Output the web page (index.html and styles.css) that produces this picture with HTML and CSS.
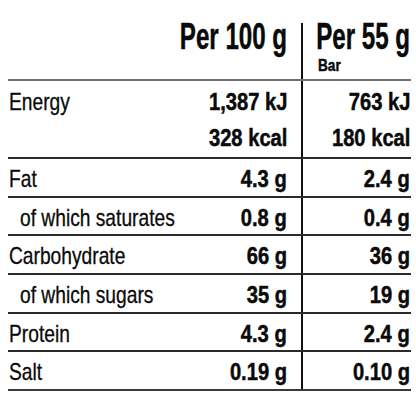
FILE: index.html
```html
<!DOCTYPE html>
<html lang="en">
<head>
    <meta charset="UTF-8">
    <meta name="viewport" content="width=device-width, initial-scale=1.0">
    <title>Nutrition Information</title>
    <link rel="stylesheet" href="styles.css">
</head>
<body>

    <div class="nutrition">
        <!-- Header -->
        <div class="row head">
            <div class="label"></div>
            <div class="col c1"><span class="txt">Per 100 g</span></div>
            <div class="col c2">
                <span class="txt">Per 55 g</span>
                <span class="sub"><span class="txt">Bar</span></span>
            </div>
        </div>

        <div class="row energy">
            <div class="label"><span class="txt">Energy</span></div>
            <div class="col c1">
                <div class="line"><span class="txt">1,387 kJ</span></div>
                <div class="line"><span class="txt">328 kcal</span></div>
            </div>
            <div class="col c2">
                <div class="line"><span class="txt">763 kJ</span></div>
                <div class="line"><span class="txt">180 kcal</span></div>
            </div>
        </div>

        <div class="row">
            <div class="label"><span class="txt">Fat</span></div>
            <div class="col c1"><span class="txt">4.3 g</span></div>
            <div class="col c2"><span class="txt">2.4 g</span></div>
        </div>

        <div class="row">
            <div class="label indent"><span class="txt">of which saturates</span></div>
            <div class="col c1"><span class="txt">0.8 g</span></div>
            <div class="col c2"><span class="txt">0.4 g</span></div>
        </div>

        <div class="row">
            <div class="label"><span class="txt">Carbohydrate</span></div>
            <div class="col c1"><span class="txt">66 g</span></div>
            <div class="col c2"><span class="txt">36 g</span></div>
        </div>

        <div class="row">
            <div class="label indent"><span class="txt">of which sugars</span></div>
            <div class="col c1"><span class="txt">35 g</span></div>
            <div class="col c2"><span class="txt">19 g</span></div>
        </div>

        <div class="row">
            <div class="label"><span class="txt">Protein</span></div>
            <div class="col c1"><span class="txt">4.3 g</span></div>
            <div class="col c2"><span class="txt">2.4 g</span></div>
        </div>

        <div class="row last">
            <div class="label"><span class="txt">Salt</span></div>
            <div class="col c1"><span class="txt">0.19 g</span></div>
            <div class="col c2"><span class="txt">0.10 g</span></div>
        </div>
    </div>

</body>
</html>
```

FILE: styles.css
```css
body {
    font-family: 'Liberation Sans', Arial, sans-serif;
    background-color: #ffffff;
    color: #0a0a0a;
    margin: 0;
    padding: 0;
}

/* Table wrapper */
.nutrition {
    width: 403px;
    margin: 23px 0 0 8px;
}

.row {
    display: flex;
    height: 36.67px;
    border-bottom: 2px solid #2a2a2a;
    font-size: 24px;
    line-height: 32.67px;
}

.row .label,
.row .col {
    padding-top: 4px;
    white-space: nowrap;
}

.row .label {
    flex: 1;
    min-width: 0;
    padding-left: 1px;
    -webkit-text-stroke: 0.3px #0a0a0a;
}

.row .label.indent {
    padding-left: 12px;
}

/* Condensed look: the text is squeezed sideways */
.txt {
    display: inline-block;
    transform: scaleX(0.8);
    transform-origin: left center;
}

.col {
    display: flex;
    flex-direction: column;
    align-items: flex-end;
    flex-shrink: 0;
    font-weight: bold;
    -webkit-text-stroke: 0.5px #0a0a0a;
}

.col .txt {
    transform: scaleX(0.84);
    transform-origin: right center;
}

.c1 {
    width: 110px;
    padding-right: 14px;
    border-right: 2px solid #111111;
    box-sizing: border-box;
}

.c2 {
    width: 108px;
    padding-right: 1px;
    box-sizing: border-box;
}

/* Header row */
.row.head {
    height: 56px;
    border-bottom-color: #6e6e6e;
}

.row.head .label,
.row.head .col {
    padding-top: 0;
    font-size: 36px;
    line-height: 27px;
}

.row.head .col .txt {
    transform: scaleX(0.67);
}

.row.head .c2 {
    padding-left: 15px;
}

.row.head .sub {
    display: block;
    align-self: flex-start;
    margin-top: 8px;
    font-size: 17px;
    line-height: 16px;
}

.row.head .sub .txt {
    transform: scaleX(0.8);
    transform-origin: left center;
}

/* Energy row has two lines */
.row.energy {
    height: 76px;
}

.row.energy .label,
.row.energy .col {
    padding-top: 3px;
    line-height: 36px;
}

.row.last {
    border-bottom-color: #3a3a3a;
}
```
